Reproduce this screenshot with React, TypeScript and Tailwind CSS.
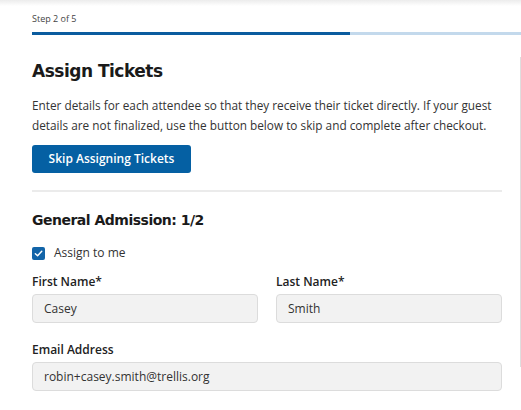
import React from 'react';

const body = { fontFamily: '"Open Sans", "Noto Sans", sans-serif' };
const heading = { fontFamily: '"DejaVu Sans", "Open Sans", sans-serif' };

const Field: React.FC<{ label: string; value: string }> = ({ label, value }) => (
  <div className="flex flex-col">
    <label className="text-[12px] font-semibold text-[#222] leading-[18px] mb-[3px]">{label}</label>
    <div className="h-[29px] rounded-[4px] border border-[#dcdcdc] bg-[#f2f2f2] px-[11px] flex items-center text-[12px] text-[#333]">
      {value}
    </div>
  </div>
);

export default function App() {
  return (
    <div className="w-[521px] h-[410px] bg-white overflow-hidden relative" style={body}>
      {/* top shadow */}
      <div className="h-[6px] bg-gradient-to-b from-[#ececec] to-white" />

      <div className="pl-[32px]">
        <div className="text-[9px] text-[#444] leading-[14px] mt-[6px]">Step 2 of 5</div>
        <div className="flex h-[3px] mt-[6px]">
          <div className="w-[318px] bg-[#0b5c9f]" />
          <div className="flex-1 bg-[#c3d9ec]" />
        </div>
      </div>

      <div className="flex">
        <div className="w-[470px] ml-[32px]">
          <h1 className="text-[17px] font-bold text-[#1a1a1a] leading-[24px] mt-[24px] tracking-[-0.5px]" style={heading}>
            Assign Tickets
          </h1>
          <p className="text-[11.8px] text-[#333] leading-[20px] mt-[12px]">
            Enter details for each attendee so that they receive their ticket directly. If your guest details are not finalized, use the button below to skip and complete after checkout.
          </p>
          <button className="mt-[10px] h-[28px] w-[159px] rounded-[3px] bg-[#0560a3] text-white text-[12px] font-semibold">
            Skip Assigning Tickets
          </button>
          <div className="h-[2px] bg-[#ebebeb] mt-[17px]" />

          <h2 className="text-[14px] font-semibold text-[#1a1a1a] leading-[20px] mt-[18px] tracking-[-0.5px]" style={heading}>
            General Admission: 1/2
          </h2>

          <div className="flex items-center mt-[14px] h-[18px]">
            <div className="w-[13px] h-[13px] rounded-[2px] bg-[#1264a8] flex items-center justify-center">
              <svg width="9" height="9" viewBox="0 0 10 10" fill="none">
                <path d="M1.5 5.2 L4 7.5 L8.6 2.5" stroke="white" strokeWidth="1.6" strokeLinecap="round" strokeLinejoin="round" />
              </svg>
            </div>
            <span className="ml-[9px] text-[12px] text-[#333] leading-[18px]">Assign to me</span>
          </div>

          <div className="grid grid-cols-2 gap-x-[18px] mt-[11px]">
            <Field label="First Name*" value="Casey" />
            <Field label="Last Name*" value="Smith" />
          </div>

          <div className="mt-[18px]">
            <Field label="Email Address" value="robin+casey.smith@trellis.org" />
          </div>
        </div>
        <div className="ml-[18px] mt-[22px] w-[1px] h-[310px] bg-[#dedede]" />
      </div>
    </div>
  );
}
